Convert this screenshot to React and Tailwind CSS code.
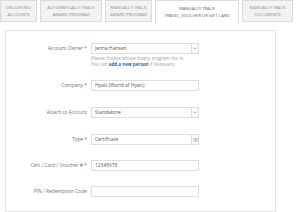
import React from "react";

const tabs = [
    { lines: ["Discovered", "Accounts"], w: "w-[37px]" },
    { lines: ["Automatically Track", "Award Program"], w: "w-[62px]" },
    { lines: ["Manually Track", "Award Program"], w: "w-[47px]" },
    { lines: ["Manually Track", "Travel, Voucher or Gift Card"], w: "w-[84px]", active: true },
    { lines: ["Manually Track", "Documents"], w: "w-[51px]" },
];

function Chevron() {
    return (
        <svg width="4" height="3" viewBox="0 0 4 3">
            <path d="M0.5 0.8 L2 2.2 L3.5 0.8" fill="none" stroke="#888" strokeWidth="0.7" />
        </svg>
    );
}

function Loader() {
    return (
        <svg width="5" height="4" viewBox="0 0 5 4">
            <rect x="0" y="0.5" width="5" height="0.7" fill="#999" />
            <rect x="0" y="1.7" width="5" height="0.7" fill="#bbb" />
            <rect x="1" y="2.9" width="3" height="0.7" fill="#aaa" />
        </svg>
    );
}

function Label({ text, required }) {
    return (
        <div className="w-[82px] pr-[1px] text-right text-[4.9px] leading-[11px] text-[#707070] whitespace-nowrap">
            {text}
            {required && <span className="text-[#e0393e]"> *</span>}
        </div>
    );
}

function Field({ value, select, icon }) {
    return (
        <div className="ml-[3px] w-[108px] h-[11px] flex border border-[#ddd] bg-white">
            <div className="flex-1 pl-[3px] text-[4.9px] leading-[9px] text-[#555] whitespace-nowrap overflow-hidden">
                {value}
            </div>
            {select && (
                <div className="w-[7px] flex items-center justify-center border-l border-[#ddd] bg-[#fafafa]">
                    {icon === "loader" ? <Loader /> : <Chevron />}
                </div>
            )}
        </div>
    );
}

export default function App() {
    return (
        <div className="w-[300px] h-[212px] overflow-hidden bg-white font-['Open_Sans',sans-serif]">
            {/* Tabs */}
            <div className="flex items-start gap-[3px] h-[24px]">
                {tabs.map((t, i) => (
                    <div
                        key={i}
                        className={`${t.w} flex flex-col items-center justify-center uppercase text-[4.3px] leading-[7px] tracking-[-0.05px] whitespace-nowrap border border-[#dcdcdc] ${
                            t.active
                                ? "h-[24px] pb-[1px] bg-white border-b-0 text-[#606060]"
                                : "h-[22px] bg-[#f2f2f2] text-[#909090]"
                        }`}
                    >
                        {t.lines.map((l) => (
                            <span key={l}>{l}</span>
                        ))}
                    </div>
                ))}
            </div>

            {/* Panel */}
            <div className="mt-[6px] ml-[5px] w-[271px] h-[182px] border border-[#e3e3e3] bg-white pt-[12px]">
                <div className="flex items-start">
                    <Label text="Account Owner" required />
                    <Field value="Jenna Hansen" select />
                </div>
                <div className="ml-[85px] mt-[0.5px] text-[4.5px] leading-[6px] text-[#a0a0a0] whitespace-nowrap">
                    <div>Please choose whose loyalty program this is.</div>
                    <div>
                        You can <span className="font-bold text-[#2b63b5]">add a new person</span> if necessary.
                    </div>
                </div>

                <div className="flex items-start mt-[13.5px]">
                    <Label text="Company" required />
                    <Field value="Hyatt (World of Hyatt)" />
                </div>

                <div className="flex items-start mt-[16px]">
                    <Label text="Attach to Account" />
                    <Field value="Standalone" select />
                </div>

                <div className="flex items-start mt-[16px]">
                    <Label text="Type" required />
                    <Field value="Certificate" select icon="loader" />
                </div>

                <div className="flex items-start mt-[15px]">
                    <Label text="Cert / Card / Voucher #" required />
                    <Field value="12345678" />
                </div>

                <div className="flex items-start mt-[15px]">
                    <Label text="PIN / Redemption Code" />
                    <Field value="" />
                </div>
            </div>
        </div>
    );
}
